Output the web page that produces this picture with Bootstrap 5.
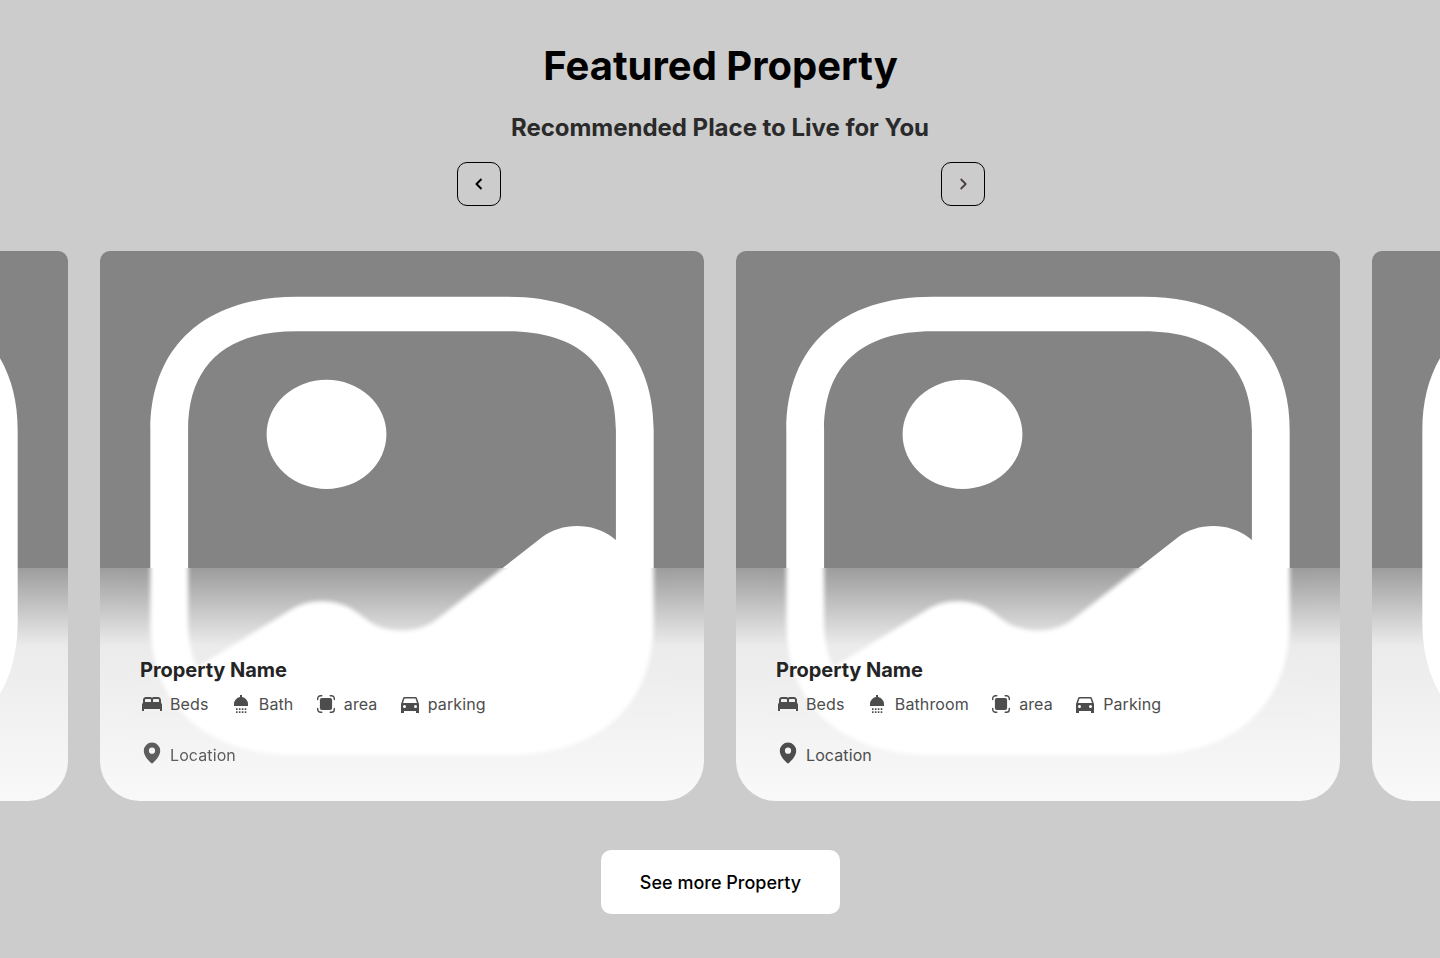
<!DOCTYPE html>
<html lang="en">
<head>
<meta charset="utf-8">
<meta name="viewport" content="width=device-width, initial-scale=1">
<title>Featured Property</title>
<link href="https://cdn.jsdelivr.net/npm/bootstrap@5.3.0/dist/css/bootstrap.min.css" rel="stylesheet">
<style>
  body { font-family: Inter, sans-serif; background: #ccc; color: #000; }
  .featured { height: 958px; padding-top: 42px; }
  .featured h1 { font-size: 40px; line-height: 48px; font-weight: 700; padding-left: 1px; }
  .featured h2 { font-size: 24px; line-height: 29px; font-weight: 700; letter-spacing: -.02px; color: #2a2a2a; margin-top: 23px; }
  .pager { width: 528px; margin: 20px 0 0 2px; }
  .pager .btn { width: 44px; height: 44px; border: 1px solid #000; border-radius: 10px; }
  .track { gap: 32px; margin-top: 45px; }
  .property { width: 604px; height: 550px; }
  .property > .art { width: 604px; height: 550px; }
  .info { height: 233px; padding: 88px 40px 0; color: #4d4d4d; }
  .info h3 { font-size: 20px; line-height: 28px; font-weight: 700; letter-spacing: -.05px; color: #242424; }
  .facts { gap: 20.4px; margin-top: 8px; font-size: 16px; line-height: 24px; font-weight: 425; letter-spacing: .1px; }
  .facts svg, .place svg { width: 24px; height: 24px; }
  .fact { gap: 6px; }
  .place { gap: 6px; margin-top: 27px; font-size: 16px; line-height: 24px; font-weight: 425; letter-spacing: .1px; }
  .place.faded { opacity: .9; }
  .place svg { margin-top: -2px; }
  .more { width: 239px; height: 64px; margin-top: 49px; border-radius: 10px; font-size: 18px; font-weight: 500; padding: 0 0 0 1px; }
</style>
</head>
<body>
<svg class="position-absolute" width="0" height="0" xmlns="http://www.w3.org/2000/svg">
  <defs>
    <clipPath id="lower"><rect y="317" width="604" height="233"/></clipPath>
    <filter id="soften" filterUnits="userSpaceOnUse" x="0" y="0" width="604" height="550" color-interpolation-filters="sRGB"><feGaussianBlur stdDeviation="2"/></filter>
    <linearGradient id="veil" gradientUnits="userSpaceOnUse" x1="0" y1="317" x2="0" y2="550">
      <stop offset="0" stop-color="#fff" stop-opacity=".2"/>
      <stop offset=".333" stop-color="#fff" stop-opacity=".84"/>
      <stop offset="1" stop-color="#fff" stop-opacity=".95"/>
    </linearGradient>
    <linearGradient id="base" gradientUnits="userSpaceOnUse" x1="0" y1="317" x2="0" y2="550">
      <stop offset="0" stop-color="#9d9d9d"/>
      <stop offset=".333" stop-color="#ebebeb"/>
      <stop offset="1" stop-color="#f9f9f9"/>
    </linearGradient>
  </defs>
  <symbol id="gallery" viewBox="0 0 24 24" preserveAspectRatio="none">
    <path fill="#fff" d="M9 10.38a2.38 2.38 0 1 0 0-4.76 2.38 2.38 0 0 0 0 4.76Z"/>
    <path fill="#fff" d="M16.19 2H7.81C4.17 2 2 4.17 2 7.81V16.19C2 17.28 2.19 18.23 2.56 19.03C3.42 20.93 5.26 22 7.81 22H16.19C19.83 22 22 19.83 22 16.19V7.81C22 4.17 19.83 2 16.19 2ZM20.37 12.5C19.59 11.83 18.33 11.83 17.55 12.5L13.39 16.07C12.61 16.74 11.35 16.74 10.57 16.07L10.23 15.79C9.52 15.17 8.39 15.11 7.59 15.65L3.85 18.16C3.63 17.6 3.5 16.95 3.5 16.19V7.81C3.5 4.99 4.99 3.5 7.81 3.5H16.19C19.01 3.5 20.5 4.99 20.5 7.81V12.61L20.37 12.5Z"/>
  </symbol>
  <symbol id="panel" viewBox="0 0 604 550">
    <path fill="#848484" d="M0 317V10A10 10 0 0 1 10 0H594A10 10 0 0 1 604 10V317Z"/>
    <path fill="url(#base)" d="M0 317H604V510A40 40 0 0 1 564 550H40A40 40 0 0 1 0 510Z"/>
  </symbol>
  <symbol id="sharp" viewBox="0 0 604 550">
    <use href="#panel" width="604" height="550"/>
    <use href="#gallery" width="604" height="550"/>
  </symbol>
  <symbol id="frosted" viewBox="0 0 604 550">
    <use href="#sharp" width="604" height="550"/>
    <g clip-path="url(#lower)">
      <rect x="30" y="317" width="544" height="193" fill="#848484"/>
      <rect x="30" y="317" width="544" height="193" fill="url(#veil)"/>
      <g filter="url(#soften)"><use href="#gallery" width="604" height="550"/></g>
    </g>
  </symbol>
  <symbol id="bed" viewBox="0 0 24 24"><path fill="currentColor" d="M2 19v-6c0-.45.09-.86.28-1.23.18-.36.42-.69.72-.97V8c0-.83.29-1.54.88-2.13A2.9 2.9 0 0 1 6 5h4c.38 0 .74.07 1.08.21.33.14.64.33.92.59.28-.25.59-.45.93-.59.33-.14.69-.21 1.07-.21h4c.83 0 1.54.29 2.13.88.58.58.87 1.29.87 2.12v2.8c.3.28.54.61.73.98.18.36.27.77.27 1.22v6h-2v-2H4v2H2Zm11-9h6V8a1 1 0 0 0-1-1h-4a1 1 0 0 0-1 1v2Zm-8 0h6V8a1 1 0 0 0-1-1H6a1 1 0 0 0-1 1v2Z"/></symbol>
  <symbol id="shower" viewBox="0 0 24 24"><path fill="currentColor" d="M11 3h2v2.100a7 7 0 0 1 6 6.900v2H5v-2a7 7 0 0 1 6-6.900ZM7 16.300h1.600v1.700H7Zm2.900 0h1.600v1.700H9.900Zm2.900 0h1.600v1.700h-1.600Zm2.900 0h1.600v1.700h-1.600ZM7 19.300h1.600v1.700H7Zm2.900 0h1.600v1.700H9.900Zm2.900 0h1.600v1.700h-1.600Zm2.900 0h1.600v1.700h-1.600Z"/></symbol>
  <symbol id="area" viewBox="0 0 24 24"><rect x="5.900" y="5.900" width="12.200" height="12.200" rx="2" fill="currentColor"/><path fill="none" stroke="currentColor" stroke-width="1.400" stroke-linecap="round" d="M3.700 7.500V6.500A2.800 2.800 0 0 1 6.500 3.700h1.300M16.200 3.700H17.500A2.800 2.800 0 0 1 20.300 6.500v1M20.300 16.500V17.500a2.800 2.800 0 0 1-2.800 2.800h-1.300M7.800 20.300H6.500A2.800 2.800 0 0 1 3.700 17.500v-1"/></symbol>
  <symbol id="car" viewBox="0 0 24 24"><path fill="currentColor" fill-rule="evenodd" d="M18.920 6.010C18.720 5.420 18.160 5 17.500 5h-11c-.66 0-1.210.42-1.420 1.010L3 12v9h3v-2h12v2h3v-9l-2.080-5.990ZM6.500 16a1.500 1.500 0 1 1 0-3 1.500 1.500 0 0 1 0 3Zm11 0a1.500 1.500 0 1 1 0-3 1.500 1.500 0 0 1 0 3ZM5 11l1.500-4.500h11L19 11H5Z"/></symbol>
  <symbol id="pin" viewBox="0 0 24 24"><path fill="currentColor" fill-rule="evenodd" d="M12 1.500a8.200 8.200 0 0 0-8.200 8.200c0 5.300 4.700 9.800 7.300 12.400a1.300 1.300 0 0 0 1.800 0c2.600-2.600 7.300-7.100 7.300-12.400A8.200 8.200 0 0 0 12 1.500Zm0 11.300a3.100 3.100 0 1 1 0-6.200 3.100 3.100 0 0 1 0 6.200Z"/></symbol>
</svg>

<main class="featured d-flex flex-column align-items-center overflow-hidden">
  <h1 class="mb-0">Featured Property</h1>
  <h2 class="mb-0">Recommended Place to Live for You</h2>
  <div class="pager d-flex justify-content-between">
    <button type="button" class="btn p-0 d-flex align-items-center justify-content-center" aria-label="Previous"><svg width="16" height="16" fill="none" stroke="#000" stroke-width="2" stroke-linejoin="round"><path d="M10.500 3 5.500 8l5 5"/></svg></button>
    <button type="button" class="btn p-0 d-flex align-items-center justify-content-center" aria-label="Next"><svg width="16" height="16" fill="none" stroke="#4a4040" stroke-width="1.800" stroke-linejoin="round"><path d="m5.700 3 5 5-5 5"/></svg></button>
  </div>

  <div class="track d-flex justify-content-center flex-shrink-0">
    <article class="property flex-shrink-0">
      <svg class="art d-block"><use href="#sharp"/></svg>
    </article>
    <article class="property position-relative flex-shrink-0">
      <svg class="art d-block"><use href="#frosted"/></svg>
      <div class="info position-absolute bottom-0 start-0 w-100">
        <h3 class="mb-0">Property Name</h3>
        <div class="facts d-flex">
          <div class="fact d-flex"><svg><use href="#bed"/></svg><span>Beds</span></div>
          <div class="fact d-flex"><svg><use href="#shower"/></svg><span>Bath</span></div>
          <div class="fact d-flex"><svg><use href="#area"/></svg><span>area</span></div>
          <div class="fact d-flex"><svg><use href="#car"/></svg><span>parking</span></div>
        </div>
        <div class="place faded d-flex"><svg><use href="#pin"/></svg><span>Location</span></div>
      </div>
    </article>
    <article class="property position-relative flex-shrink-0">
      <svg class="art d-block"><use href="#frosted"/></svg>
      <div class="info position-absolute bottom-0 start-0 w-100">
        <h3 class="mb-0">Property Name</h3>
        <div class="facts d-flex">
          <div class="fact d-flex"><svg><use href="#bed"/></svg><span>Beds</span></div>
          <div class="fact d-flex"><svg><use href="#shower"/></svg><span>Bathroom</span></div>
          <div class="fact d-flex"><svg><use href="#area"/></svg><span>area</span></div>
          <div class="fact d-flex"><svg><use href="#car"/></svg><span>Parking</span></div>
        </div>
        <div class="place d-flex"><svg><use href="#pin"/></svg><span>Location</span></div>
      </div>
    </article>
    <article class="property flex-shrink-0">
      <svg class="art d-block"><use href="#sharp"/></svg>
    </article>
  </div>

  <button type="button" class="more btn btn-light bg-white border-0 text-black flex-shrink-0">See more Property</button>
</main>
<script src="https://cdn.jsdelivr.net/npm/bootstrap@5.3.0/dist/js/bootstrap.bundle.min.js"></script>
</body>
</html>
